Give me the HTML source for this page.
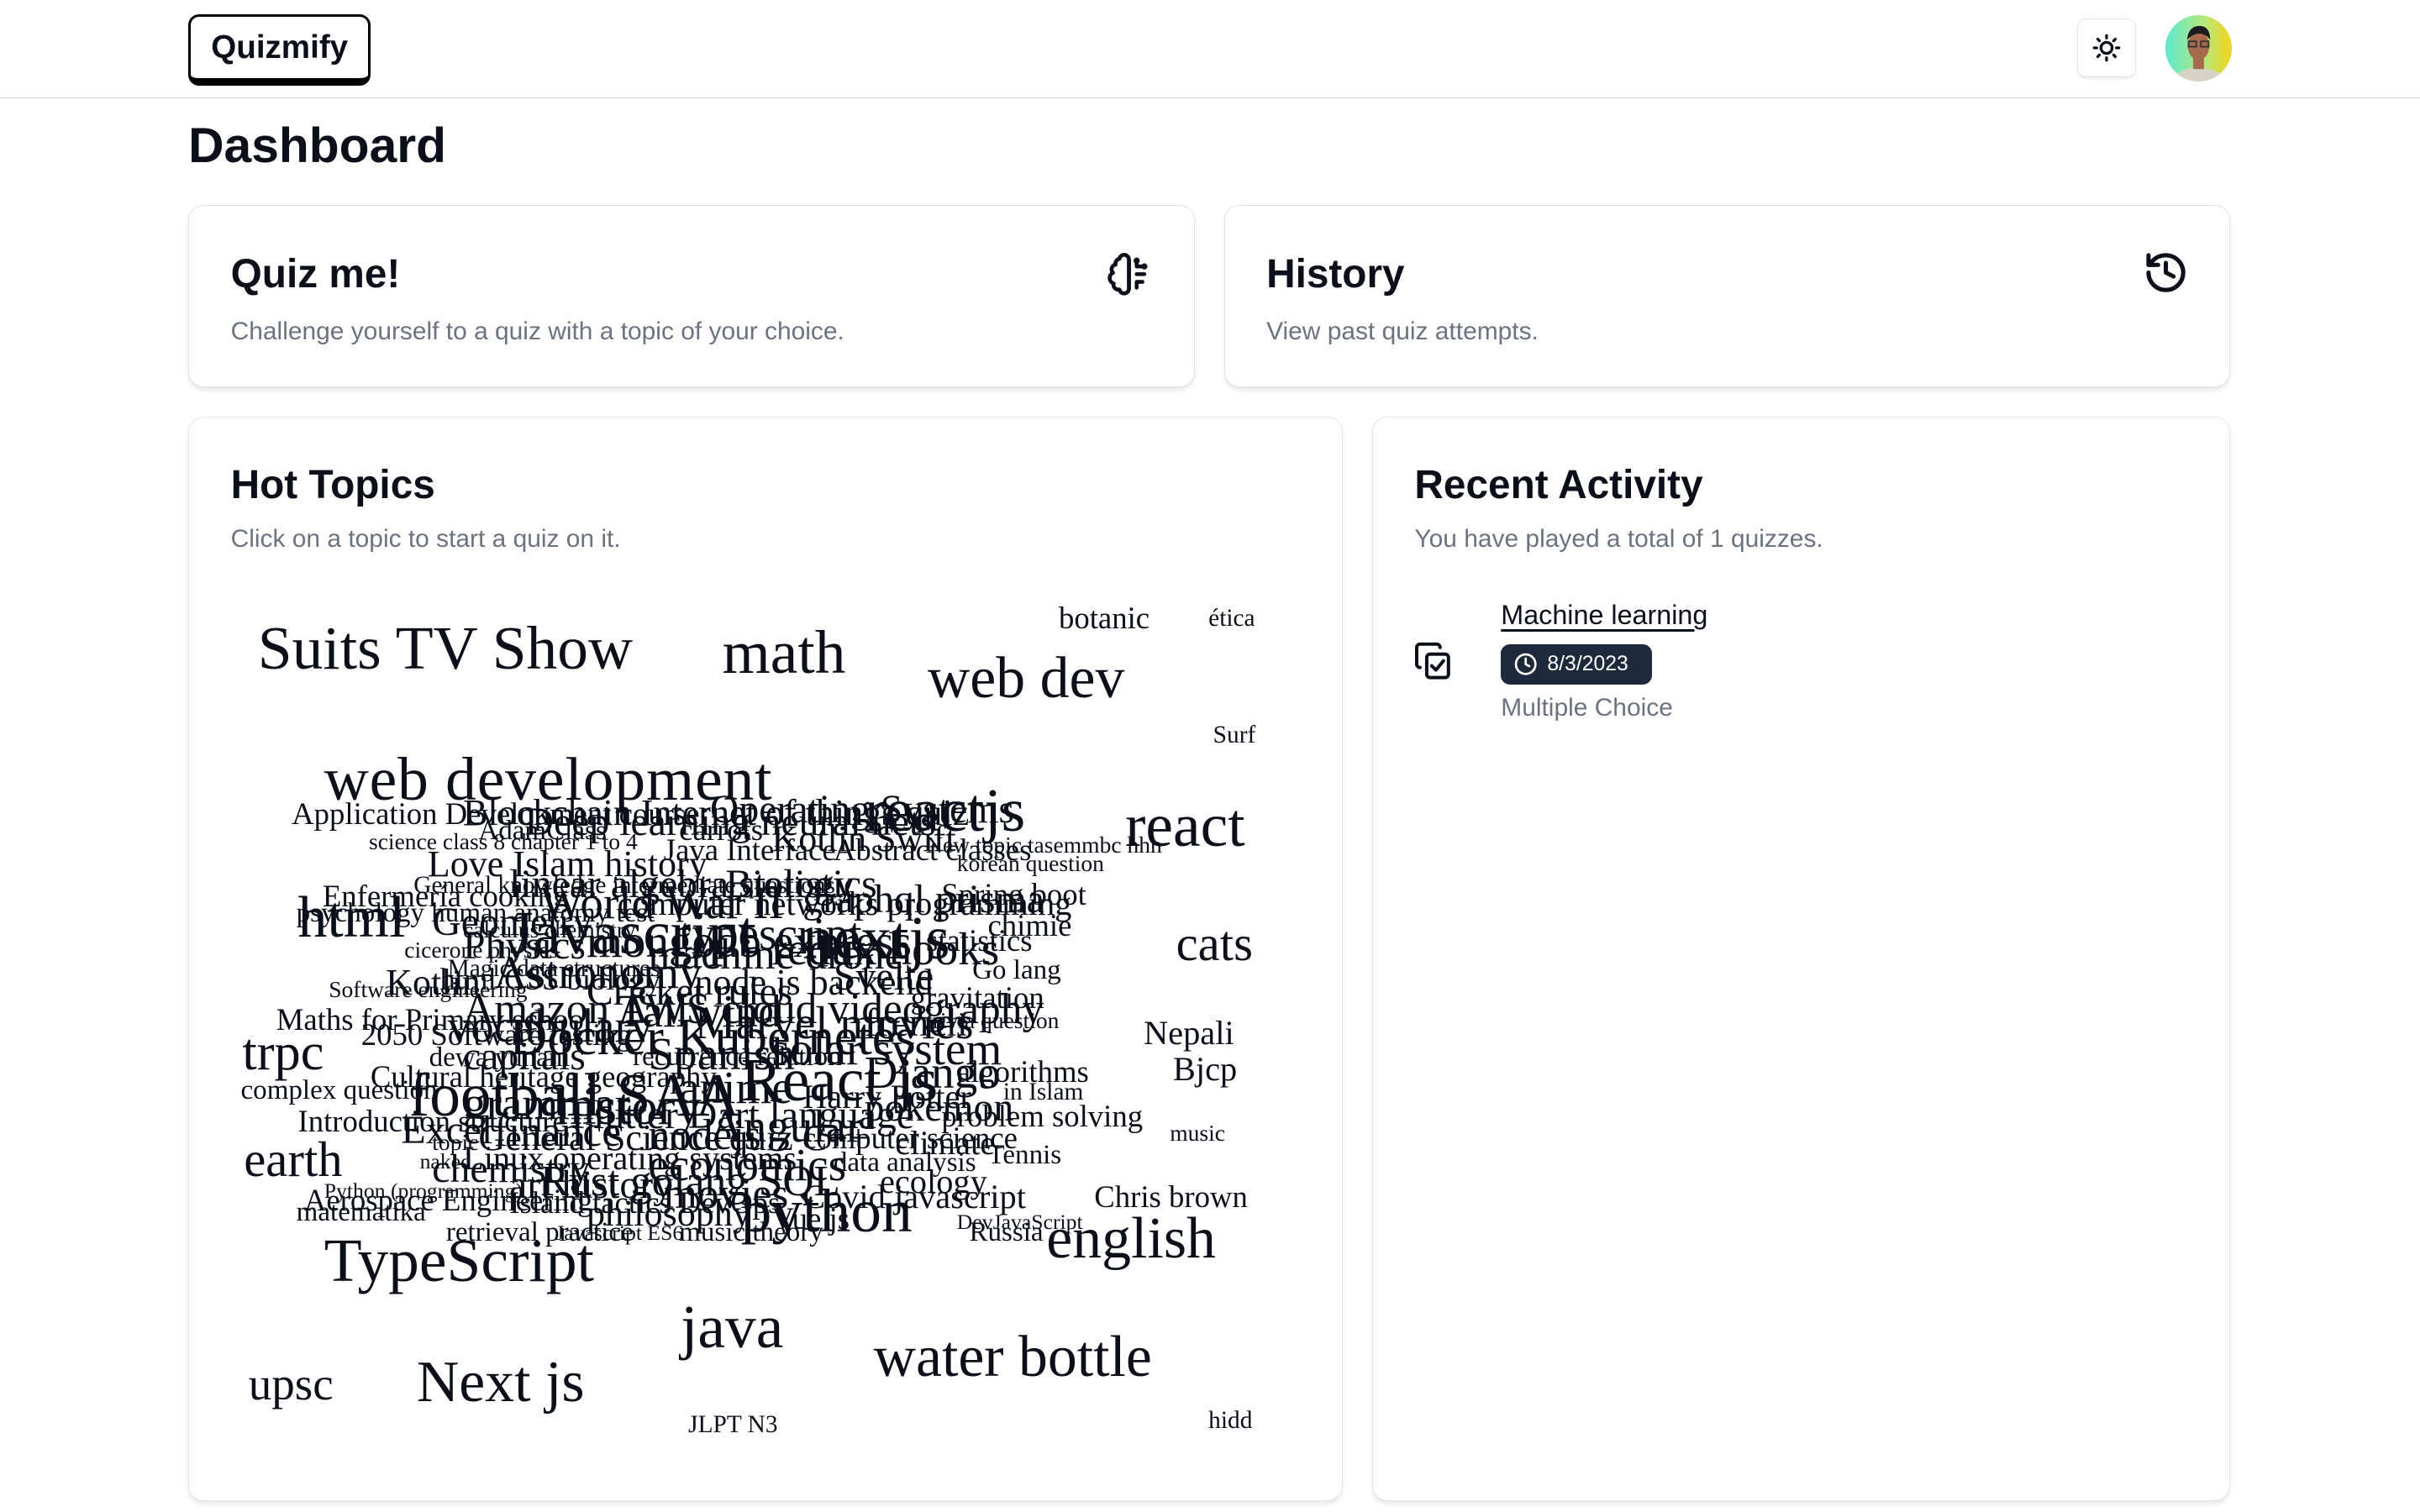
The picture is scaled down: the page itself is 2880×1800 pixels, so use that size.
<!DOCTYPE html>
<html><head><meta charset="utf-8">
<style>
html,body{margin:0;padding:0;background:#fff;}
body{width:2880px;height:1800px;overflow:hidden;}
#root{zoom:1.836735;width:1568px;height:980px;position:relative;font-family:"Liberation Sans",sans-serif;color:#0b0f19;}
.hdr{position:absolute;left:0;top:0;width:1568px;height:63px;border-bottom:1px solid #d4d4d8;}
.logo{position:absolute;left:122px;top:9px;width:115px;height:40px;border:2px solid #000;border-bottom-width:5px;border-radius:7px;font-weight:bold;font-size:21px;line-height:40px;text-align:center;}
.sun{position:absolute;left:1346px;top:12px;width:37px;height:37px;border:1px solid #e4e4e7;border-radius:6px;box-shadow:0 1px 2px rgba(0,0,0,.08);}
.av{position:absolute;left:1403px;top:10px;width:43px;height:43px;border-radius:50%;background:linear-gradient(90deg,#5ee9d0,#b6e87a 60%,#f4d418);overflow:hidden;}
h1{position:absolute;left:122px;top:76px;margin:0;font-size:32px;font-weight:bold;}
.card{position:absolute;border:1px solid #e4e4e7;border-radius:10px;box-shadow:0 2px 3px rgba(0,0,0,.09);background:#fff;}
.t{position:absolute;left:27px;font-weight:bold;font-size:26px;}
.d{position:absolute;left:27px;font-size:16.3px;color:#6b7280;}
.wc{position:absolute;left:0;top:0;font-family:"Liberation Serif",serif;}
.wc span{position:absolute;white-space:nowrap;line-height:1;}
</style></head><body><div id="root">
<div class="hdr">
<div class="logo">Quizmify</div>
<div class="sun"><svg width="37" height="37" viewBox="0 0 37 37" fill="none" stroke="#0b0f19" stroke-width="1.8" stroke-linecap="round"><circle cx="18.5" cy="18.5" r="3.6"/><path d="M18.5 10.5v1.6M18.5 24.9v1.6M10.5 18.5h1.6M24.9 18.5h1.6M12.8 12.8l1.1 1.1M23.1 23.1l1.1 1.1M12.8 24.2l1.1-1.1M23.1 13.9l1.1-1.1"/></svg></div>
<div class="av"><svg width="43" height="43" viewBox="0 0 43 43"><ellipse cx="21.5" cy="44" rx="17" ry="10" fill="#d9d2c8"/><rect x="18" y="27" width="7" height="8" fill="#a86a4c"/><ellipse cx="21.5" cy="20" rx="7" ry="9" fill="#a86a4c"/><path d="M14 16q1-9 8-9t7 9q-3-4-7-4t-8 4z" fill="#1d1b22"/><rect x="15" y="17" width="5" height="3.5" fill="none" stroke="#333" stroke-width="1"/><rect x="23" y="17" width="5" height="3.5" fill="none" stroke="#333" stroke-width="1"/></svg></div>
</div>
<h1>Dashboard</h1>

<div class="card" style="left:122px;top:133px;width:651px;height:117px;">
<div class="t" style="top:29px;">Quiz me!</div>
<div class="d" style="top:72px;">Challenge yourself to a quiz with a topic of your choice.</div>
<svg style="position:absolute;left:594px;top:28px" width="30" height="32" viewBox="0 0 24 24" fill="none" stroke="#0b0f19" stroke-width="2" stroke-linecap="round" stroke-linejoin="round"><path d="M12 4.5a2.5 2.5 0 0 0-4.96-.46 2.5 2.5 0 0 0-1.98 3 2.5 2.5 0 0 0-1.320 4.24 3 3 0 0 0 .34 5.58 2.5 2.5 0 0 0 2.96 3.08A2.5 2.5 0 0 0 12 19.5z"/><path d="M12 4.5V19.5M16 8h4M16 12h4M16 16h3M16 8V5.5M16 16v3"/><circle cx="16" cy="5" r=".6"/><circle cx="20" cy="8" r=".6"/></svg>
</div>
<div class="card" style="left:793px;top:133px;width:651px;height:117px;">
<div class="t" style="top:29px;">History</div>
<div class="d" style="top:72px;">View past quiz attempts.</div>
<svg style="position:absolute;left:595px;top:28px" width="30" height="30" viewBox="0 0 24 24" fill="none" stroke="#0b0f19" stroke-width="2.2" stroke-linecap="round" stroke-linejoin="round"><path d="M3 12a9 9 0 1 0 9-9 9.75 9.75 0 0 0-6.74 2.740L3 8"/><path d="M3 3v5h5"/><path d="M12 7v5l4 2"/></svg>
</div>

<div class="card" style="left:122px;top:270px;width:747px;height:702px;">
<div class="t" style="top:29px;">Hot Topics</div>
<div class="d" style="top:70px;">Click on a topic to start a quiz on it.</div>
</div>
<div class="card" style="left:889px;top:270px;width:555px;height:702px;">
<div class="t" style="top:29px;">Recent Activity</div>
<div class="d" style="top:70px;">You have played a total of 1 quizzes.</div>
<svg style="position:absolute;left:26px;top:144px" width="26" height="28" viewBox="0 0 24 24" fill="none" stroke="#0b0f19" stroke-width="2" stroke-linecap="round" stroke-linejoin="round"><rect x="8" y="8" width="13" height="14" rx="2"/><path d="M4 16c-1.1 0-2-.9-2-2V4c0-1.1.9-2 2-2h10c1.1 0 2 .9 2 2"/><path d="M11 15l2.5 2.5L18 12"/></svg>
<div style="position:absolute;left:83px;top:118px;font-size:17.6px;text-decoration:underline;text-underline-offset:3px;">Machine learning</div>
<div style="position:absolute;left:83px;top:147px;width:98px;height:26px;background:#1e293b;border-radius:6px;color:#fff;font-size:13.5px;line-height:26px;"><svg style="position:absolute;left:8px;top:5px" width="16" height="16" viewBox="0 0 24 24" fill="none" stroke="#fff" stroke-width="2.2" stroke-linecap="round"><circle cx="12" cy="12" r="9.5"/><path d="M12 6.5V12l3.5 2"/></svg><span style="position:absolute;left:30px;">8/3/2023</span></div>
<div style="position:absolute;left:83px;top:179px;font-size:16.3px;color:#6b7280;">Multiple Choice</div>
</div>

<div class="wc">
<span style="left:167px;top:400px;font-size:40px">Suits TV Show</span>
<span style="left:468px;top:403px;font-size:40px">math</span>
<span style="left:686px;top:391px;font-size:20px">botanic</span>
<span style="left:783px;top:393px;font-size:16px">ética</span>
<span style="left:601px;top:421px;font-size:38px">web dev</span>
<span style="left:786px;top:469px;font-size:16px">Surf</span>
<span style="left:210px;top:485px;font-size:40px;letter-spacing:0.5px">web development</span>
<span style="left:729px;top:515px;font-size:40px">react</span>
<span style="left:762px;top:596px;font-size:32px">cats</span>
<span style="left:193px;top:576px;font-size:38px">html</span>
<span style="left:741px;top:659px;font-size:22px">Nepali</span>
<span style="left:157px;top:665px;font-size:34px">trpc</span>
<span style="left:760px;top:682px;font-size:22px">Bjcp</span>
<span style="left:156px;top:698px;font-size:18px">complex question</span>
<span style="left:158px;top:736px;font-size:32px">earth</span>
<span style="left:758px;top:727px;font-size:15px">music</span>
<span style="left:709px;top:766px;font-size:20px">Chris brown</span>
<span style="left:678px;top:784px;font-size:38px">english</span>
<span style="left:210px;top:797px;font-size:40px">TypeScript</span>
<span style="left:441px;top:840px;font-size:40px">java</span>
<span style="left:566px;top:861px;font-size:38px">water bottle</span>
<span style="left:161px;top:882px;font-size:30px">upsc</span>
<span style="left:270px;top:877px;font-size:38px">Next js</span>
<span style="left:446px;top:916px;font-size:16px">JLPT N3</span>
<span style="left:783px;top:913px;font-size:16px">hidd</span>
<!-- dense cluster -->
<span style="left:189px;top:518px;font-size:20px">Application Development course</span>
<span style="left:300px;top:515px;font-size:24px">Blockchain Internet of things quiz</span>
<span style="left:560px;top:505px;font-size:40px">reactjs</span>
<span style="left:460px;top:512px;font-size:26px">Operating Systems</span>
<span style="left:239px;top:538px;font-size:15px">science class 8 chapter 1 to 4</span>
<span style="left:440px;top:528px;font-size:20px">carrots</span>
<span style="left:540px;top:541px;font-size:20px">Abstract classes</span>
<span style="left:600px;top:540px;font-size:15px">New topic tasemmbc hhh</span>
<span style="left:277px;top:548px;font-size:24px">Love Islam history</span>
<span style="left:430px;top:541px;font-size:20px">Java Interface</span>
<span style="left:620px;top:552px;font-size:15px">korean question</span>
<span style="left:330px;top:560px;font-size:26px">linear algebra statistics</span>
<span style="left:268px;top:566px;font-size:16px">General knowledge intermediate questions</span>
<span style="left:209px;top:571px;font-size:20px">Enfermería cooking</span>
<span style="left:192px;top:583px;font-size:18px">psychology human anatomy test</span>
<span style="left:400px;top:575px;font-size:22px">computer networks programming</span>
<span style="left:300px;top:595px;font-size:15px">calculus chemistry</span>
<span style="left:330px;top:585px;font-size:40px">Javascript</span>
<span style="left:520px;top:588px;font-size:40px">nextjs</span>
<span style="left:640px;top:590px;font-size:20px">chimie</span>
<span style="left:262px;top:608px;font-size:15px">cicerone physics</span>
<span style="left:420px;top:605px;font-size:28px">machine drone</span>
<span style="left:290px;top:620px;font-size:16px">Magic data structures</span>
<span style="left:285px;top:625px;font-size:20px">html CSS biology</span>
<span style="left:213px;top:634px;font-size:15px">Software engineering</span>
<span style="left:300px;top:640px;font-size:28px">Amazon AWS cloud videography</span>
<span style="left:590px;top:637px;font-size:20px">gravitation</span>
<span style="left:179px;top:651px;font-size:20px">Maths for Primary school</span>
<span style="left:600px;top:654px;font-size:15px">trivia question</span>
<span style="left:234px;top:661px;font-size:20px">2050 Software testing</span>
<span style="left:330px;top:655px;font-size:34px">Docker Kubernetes</span>
<span style="left:500px;top:665px;font-size:30px">solar system</span>
<span style="left:278px;top:677px;font-size:18px">dewa yunani</span>
<span style="left:410px;top:676px;font-size:18px">recurrence relation</span>
<span style="left:240px;top:688px;font-size:20px">Cultural heritage geography</span>
<span style="left:480px;top:680px;font-size:40px">React js</span>
<span style="left:620px;top:685px;font-size:20px">algorithms</span>
<span style="left:265px;top:690px;font-size:40px">football SAA</span>
<span style="left:520px;top:700px;font-size:22px">Harry Potter</span>
<span style="left:650px;top:700px;font-size:16px">in Islam</span>
<span style="left:193px;top:717px;font-size:20px">Introduction structure</span>
<span style="left:370px;top:710px;font-size:26px">Flutter Dart language</span>
<span style="left:610px;top:714px;font-size:20px">problem solving</span>
<span style="left:280px;top:733px;font-size:15px">topic</span>
<span style="left:310px;top:726px;font-size:24px">General Science quiz C++</span>
<span style="left:520px;top:728px;font-size:20px">computer science</span>
<span style="left:272px;top:746px;font-size:14px">naked</span>
<span style="left:300px;top:740px;font-size:22px">Linux operating systems</span>
<span style="left:540px;top:745px;font-size:18px">data analysis</span>
<span style="left:350px;top:752px;font-size:28px">Rust golang SQL</span>
<span style="left:210px;top:765px;font-size:14px">Python (programming)</span>
<span style="left:197px;top:768px;font-size:20px">Aerospace Engineering</span>
<span style="left:192px;top:777px;font-size:18px">matematika</span>
<span style="left:330px;top:770px;font-size:20px">Island tactics DevOps</span>
<span style="left:520px;top:765px;font-size:22px">Covid javascript</span>
<span style="left:480px;top:765px;font-size:40px">python</span>
<span style="left:289px;top:790px;font-size:18px">retrieval practice</span>
<span style="left:360px;top:792px;font-size:14px">Javascript ES6</span>
<span style="left:628px;top:790px;font-size:18px">Russia</span>
<span style="left:620px;top:785px;font-size:14px">DevJavaScript</span>
<span style="left:380px;top:595px;font-size:30px">mongodb express</span>
<span style="left:450px;top:625px;font-size:24px">node js backend</span>
<span style="left:360px;top:700px;font-size:34px">history</span>
<span style="left:420px;top:740px;font-size:30px">economics</span>
<span style="left:300px;top:600px;font-size:26px">Physics</span>
<span style="left:470px;top:560px;font-size:26px">Biology</span>
<span style="left:400px;top:640px;font-size:30px">Tailwind</span>
<span style="left:460px;top:715px;font-size:30px">Angular</span>
<span style="left:280px;top:745px;font-size:26px">chemistry</span>
<span style="left:540px;top:620px;font-size:26px">Svelte</span>
<!-- extra density -->
<span style="left:340px;top:520px;font-size:26px">Deep learning neural nets</span>
<span style="left:500px;top:532px;font-size:24px">Kotlin Swift</span>
<span style="left:310px;top:530px;font-size:18px">AdamClass</span>
<span style="left:350px;top:570px;font-size:30px">World War II</span>
<span style="left:520px;top:570px;font-size:26px">graphql prisma</span>
<span style="left:280px;top:585px;font-size:26px">Geometry</span>
<span style="left:440px;top:590px;font-size:30px">typescript</span>
<span style="left:320px;top:615px;font-size:30px">Astronomy</span>
<span style="left:500px;top:600px;font-size:30px">redux hooks</span>
<span style="left:380px;top:630px;font-size:26px">Cricket rules</span>
<span style="left:290px;top:650px;font-size:30px">vocabulary</span>
<span style="left:450px;top:648px;font-size:30px">Marvel movies</span>
<span style="left:560px;top:650px;font-size:26px">french</span>
<span style="left:300px;top:672px;font-size:26px">capitals</span>
<span style="left:420px;top:668px;font-size:30px">Spanish</span>
<span style="left:560px;top:680px;font-size:30px">Django</span>
<span style="left:300px;top:700px;font-size:30px">grammar</span>
<span style="left:440px;top:690px;font-size:30px">anime</span>
<span style="left:560px;top:705px;font-size:26px">pokemon</span>
<span style="left:320px;top:720px;font-size:28px">finance</span>
<span style="left:420px;top:722px;font-size:28px">nodejs</span>
<span style="left:580px;top:730px;font-size:22px">climate</span>
<span style="left:330px;top:755px;font-size:26px">art history</span>
<span style="left:430px;top:760px;font-size:28px">movies</span>
<span style="left:570px;top:755px;font-size:22px">ecology</span>
<span style="left:380px;top:775px;font-size:24px">philosophy</span>
<span style="left:500px;top:780px;font-size:20px">Vue js</span>
<span style="left:440px;top:790px;font-size:18px">music theory</span>
<span style="left:250px;top:625px;font-size:24px">Kotlin</span>
<span style="left:260px;top:720px;font-size:26px">Excel</span>
<span style="left:600px;top:600px;font-size:20px">statistics</span>
<span style="left:610px;top:570px;font-size:20px">Spring boot</span>
<span style="left:630px;top:620px;font-size:18px">Go lang</span>
<span style="left:640px;top:740px;font-size:18px">Tennis</span>
</div>
</div></body></html>
